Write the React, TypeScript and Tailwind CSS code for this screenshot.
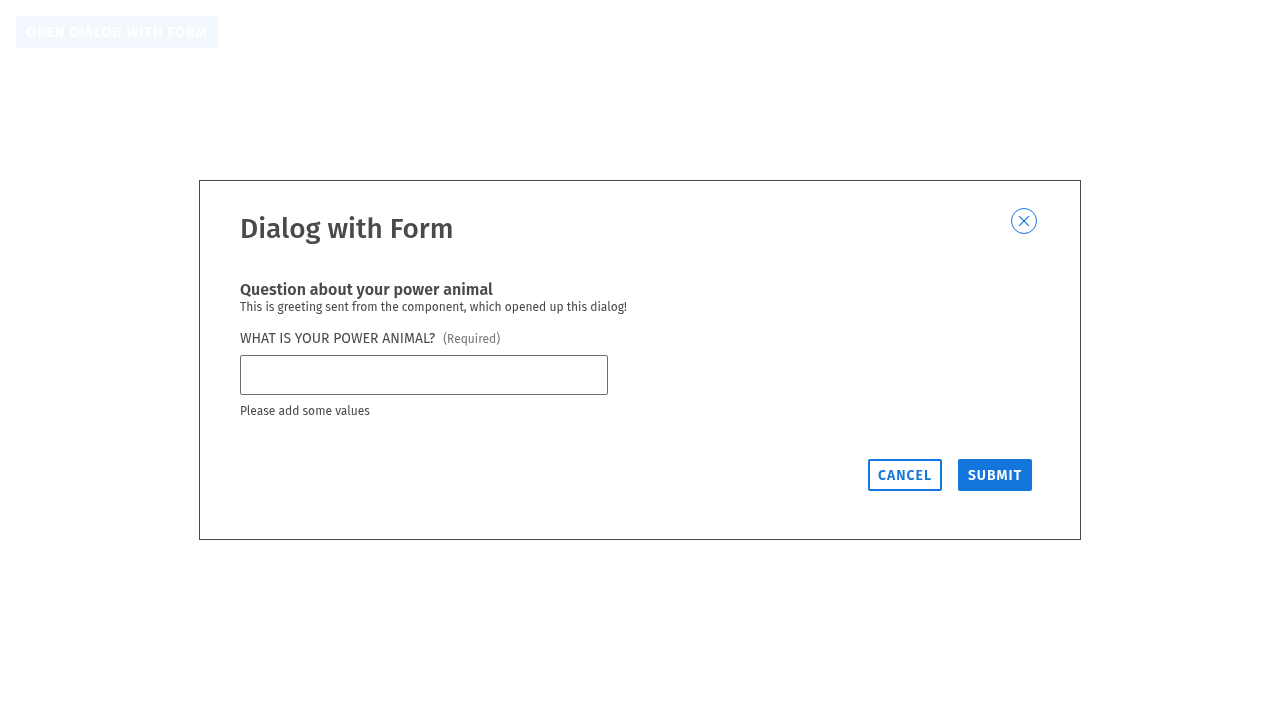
import { useState } from "react";

const buttonBase =
  "h-8 rounded-xs text-sm leading-[17px] font-semibold tracking-[1px] uppercase whitespace-nowrap";

function CloseIcon() {
  return (
    <svg width="26" height="26" viewBox="0 0 26 26" fill="none" stroke="currentColor" aria-hidden="true">
      <circle cx="13" cy="13" r="12.5" strokeWidth="1" />
      <path d="M8.1 8.1l9.8 9.8M17.9 8.1l-9.8 9.8" strokeWidth="1.2" />
    </svg>
  );
}

function FormDialog({ onClose }: { onClose: () => void }) {
  const [animal, setAnimal] = useState("");

  return (
    <div className="fixed inset-0 flex items-center justify-center bg-white/95 p-4 will-change-transform">
      <section
        role="dialog"
        aria-modal="true"
        aria-labelledby="dialog-title"
        className="w-full max-w-[882px] border border-[#4a4a4a] bg-white px-10 pt-7 pb-12 will-change-transform"
      >
        <header className="flex items-start justify-between pr-[3px]">
          <h1 id="dialog-title" className="text-[28px] leading-10 font-medium">
            Dialog with Form
          </h1>
          <button type="button" aria-label="Close" onClick={onClose} className="-mt-px text-[#1276dc]">
            <CloseIcon />
          </button>
        </header>

        <form
          className="mt-8"
          onSubmit={(event) => {
            event.preventDefault();
            onClose();
          }}
        >
          <h2 className="text-base leading-[18px] font-semibold">Question about your power animal</h2>
          <p className="text-xs leading-4">
            This is greeting sent from the component, which opened up this dialog!
          </p>
          <label htmlFor="animal" className="mt-3 flex items-baseline gap-2 text-sm leading-6">
            <span className="uppercase">What is your power animal?</span>
            <span className="text-xs text-[#767676]">(Required)</span>
          </label>
          <input
            id="animal"
            type="text"
            value={animal}
            onChange={(event) => setAnimal(event.target.value)}
            aria-describedby="animal-hint"
            className="mt-1 block h-10 w-full max-w-[368px] rounded-xs border border-[#6e6e6e] px-3 text-base outline-none"
          />
          <p id="animal-hint" className="mt-2 text-xs leading-4">
            Please add some values
          </p>
          <div className="mt-10 flex justify-end gap-4 pr-2">
            <button
              type="button"
              onClick={onClose}
              className={`${buttonBase} w-[74px] border-2 border-[#1276dc] text-[#1276dc]`}
            >
              Cancel
            </button>
            <button type="submit" className={`${buttonBase} w-[74px] bg-[#1276dc] text-white`}>
              Submit
            </button>
          </div>
        </form>
      </section>
    </div>
  );
}

export default function App() {
  const [open, setOpen] = useState(true);

  return (
    <main className="min-h-screen bg-white p-4 font-['Fira_Sans','Roboto',sans-serif] text-[#4a4a4a] antialiased">
      <button
        type="button"
        onClick={() => setOpen(true)}
        className={`${buttonBase} w-[202px] bg-[#1276dc] text-white`}
      >
        Open dialog with form
      </button>
      {open && <FormDialog onClose={() => setOpen(false)} />}
    </main>
  );
}
